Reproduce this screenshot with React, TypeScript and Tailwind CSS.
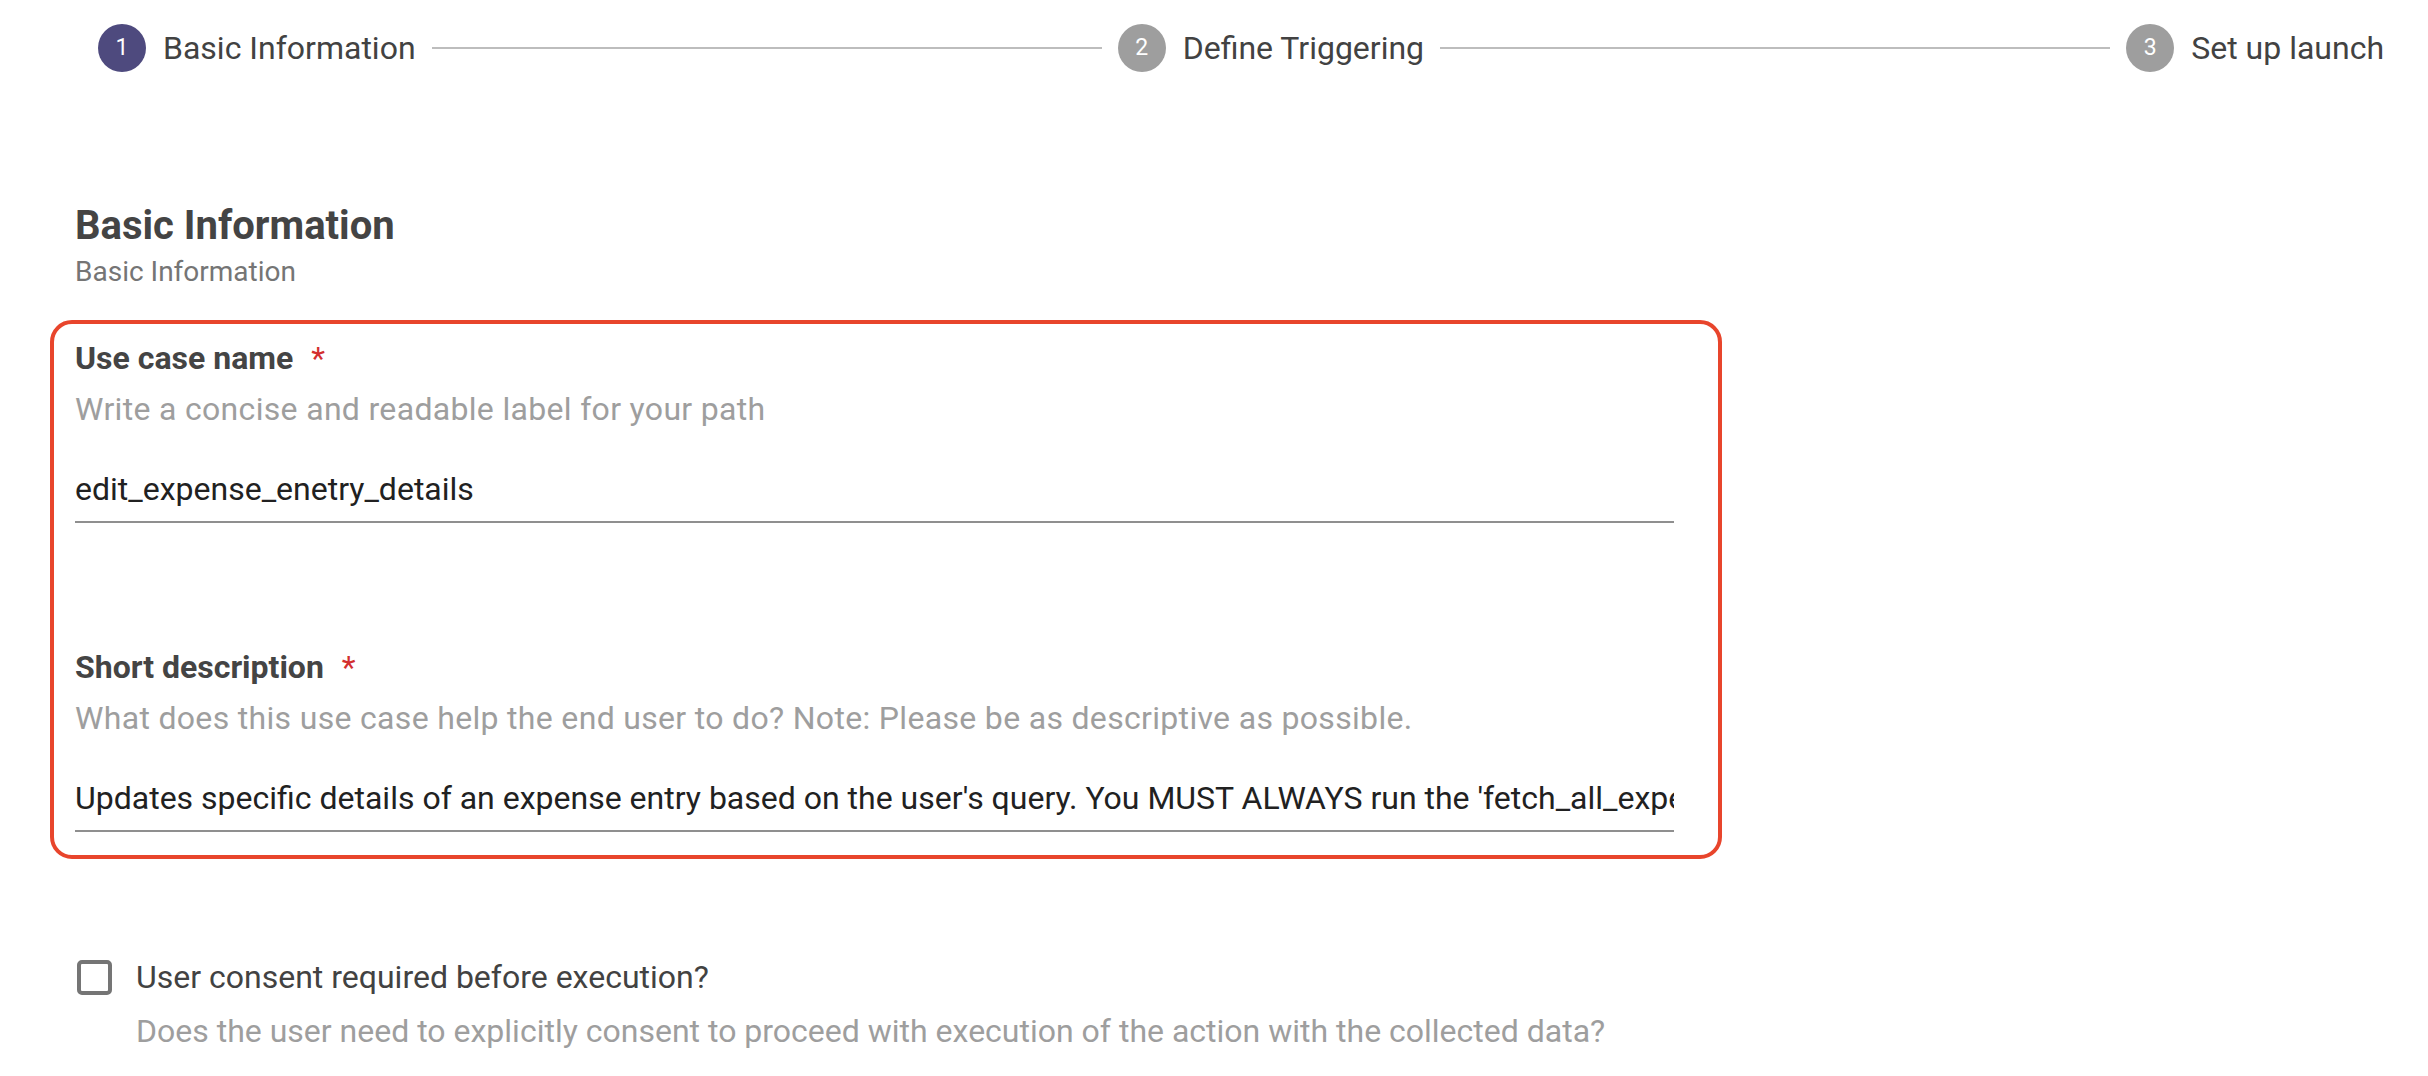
import React from "react";

type Step = { label: string; active?: boolean };

const steps: Step[] = [
  { label: "Basic Information", active: true },
  { label: "Define Triggering" },
  { label: "Set up launch" },
];

function Stepper() {
  return (
    <div className="flex items-center pl-[98px] pr-[44px] pt-[24px]">
      {steps.map((step, idx) => (
        <React.Fragment key={step.label}>
          {idx > 0 ? <div className="mx-[16px] h-[2px] flex-1 bg-[#bdbdbd]" /> : null}
          <div className="flex items-center gap-[17px]">
            <div
              className={`flex h-[48px] w-[48px] items-center justify-center rounded-full text-[23px] text-white ${
                step.active ? "bg-[#4e4a7e]" : "bg-[#9e9e9e]"
              }`}
            >
              {idx + 1}
            </div>
            <span className="whitespace-nowrap text-[32px] leading-[36px] text-[#424242]">{step.label}</span>
          </div>
        </React.Fragment>
      ))}
    </div>
  );
}

type FieldProps = {
  label: string;
  hint: string;
  value: string;
  className?: string;
};

function TextField({ label, hint, value, className = "" }: FieldProps) {
  return (
    <div className={className}>
      <div className="flex items-center text-[32px] leading-[36px]">
        <span className="font-bold text-[#444444]">{label}</span>
        <span className="ml-[18px] text-[#d32f2f]">*</span>
      </div>
      <p className="mt-[15px] text-[32px] leading-[36px] tracking-[0.01em] text-[#9e9e9e]">{hint}</p>
      <div className="mt-[44px] border-b-2 border-[#8f8f8f] pb-[14px]">
        <input
          readOnly
          value={value}
          className="block h-[36px] w-full bg-transparent text-[32px] leading-[36px] text-[#212121] outline-none"
        />
      </div>
    </div>
  );
}

export default function App() {
  return (
    <div className="min-h-screen bg-white font-['Roboto',sans-serif]">
      <Stepper />

      <div className="pl-[75px]">
        <h2 className="mt-[132px] text-[40px] font-bold leading-[44px] text-[#444444]">Basic Information</h2>
        <p className="mt-[8px] text-[28px] leading-[32px] text-[#757575]">Basic Information</p>

        <div className="-ml-[25px] mt-[32px] w-[1672px] rounded-[22px] border-4 border-[#e8452c] pb-[23px] pl-[21px] pr-[44px] pt-[16px]">
          <TextField
            label="Use case name"
            hint="Write a concise and readable label for your path"
            value="edit_expense_enetry_details"
          />
          <TextField
            className="mt-[126px]"
            label="Short description"
            hint="What does this use case help the end user to do? Note: Please be as descriptive as possible."
            value="Updates specific details of an expense entry based on the user's query. You MUST ALWAYS run the 'fetch_all_expenses' tool first to get the expense id."
          />
        </div>

        <div className="mt-[100px] flex items-center">
          <div className="ml-[2px] h-[35px] w-[35px] rounded-[5px] border-4 border-[#757575]" />
          <span className="ml-[24px] text-[32px] leading-[36px] text-[#424242]">User consent required before execution?</span>
        </div>
        <p className="ml-[61px] mt-[18px] text-[32px] leading-[36px] text-[#9e9e9e]">
          Does the user need to explicitly consent to proceed with execution of the action with the collected data?
        </p>
      </div>
    </div>
  );
}
